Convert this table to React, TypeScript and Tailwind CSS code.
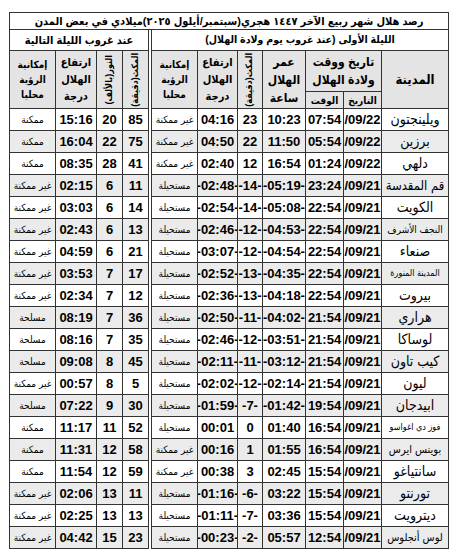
import React from "react";

type Row = {
  city: string;
  citySize?: string;
  date: string;
  time: string;
  age: string;
  m1: string;
  alt1: string;
  v1: string;
  m2: string;
  nur: string;
  alt2: string;
  v2: string;
};

const rows: Row[] = [
  { city: "ويلينجتون", date: "/09/22", time: "07:54", age: "10:23", m1: "23", alt1: "04:16", v1: "غير ممكنة", m2: "85", nur: "20", alt2: "15:16", v2: "ممكنة" },
  { city: "برزين", date: "/09/22", time: "05:54", age: "11:50", m1: "22", alt1: "04:50", v1: "غير ممكنة", m2: "75", nur: "22", alt2: "16:04", v2: "ممكنة" },
  { city: "دلهي", date: "/09/22", time: "01:24", age: "16:54", m1: "12", alt1: "02:40", v1: "غير ممكنة", m2: "41", nur: "28", alt2: "08:35", v2: "ممكنة" },
  { city: "قم المقدسة", citySize: "text-[13px]", date: "/09/21", time: "23:24", age: "-05:19-", m1: "-14-", alt1: "-02:48-", v1: "مستحيلة", m2: "11", nur: "6", alt2: "02:15", v2: "غير ممكنة" },
  { city: "الكويت", date: "/09/21", time: "22:54", age: "-05:08-", m1: "-14-", alt1: "-02:54-", v1: "مستحيلة", m2: "14", nur: "6", alt2: "03:03", v2: "غير ممكنة" },
  { city: "النجف الأشرف", citySize: "text-[10px]", date: "/09/21", time: "22:54", age: "-04:53-", m1: "-12-", alt1: "-02:46-", v1: "مستحيلة", m2: "13", nur: "6", alt2: "02:43", v2: "غير ممكنة" },
  { city: "صنعاء", date: "/09/21", time: "22:54", age: "-04:54-", m1: "-12-", alt1: "-03:07-", v1: "مستحيلة", m2: "21", nur: "6", alt2: "04:59", v2: "غير ممكنة" },
  { city: "المدينة المنورة", citySize: "text-[9px]", date: "/09/21", time: "22:54", age: "-04:35-", m1: "-13-", alt1: "-02:52-", v1: "مستحيلة", m2: "17", nur: "7", alt2: "03:53", v2: "غير ممكنة" },
  { city: "بيروت", date: "/09/21", time: "22:54", age: "-04:18-", m1: "-13-", alt1: "-02:36-", v1: "مستحيلة", m2: "12", nur: "7", alt2: "02:34", v2: "غير ممكنة" },
  { city: "هراري", date: "/09/21", time: "21:54", age: "-04:02-", m1: "-11-", alt1: "-02:50-", v1: "مستحيلة", m2: "36", nur: "7", alt2: "08:19", v2: "مسلحة" },
  { city: "لوساكا", date: "/09/21", time: "21:54", age: "-03:51-", m1: "-12-", alt1: "-02:46-", v1: "مستحيلة", m2: "35", nur: "7", alt2: "08:16", v2: "مسلحة" },
  { city: "كيب تاون", date: "/09/21", time: "21:54", age: "-03:12-", m1: "-11-", alt1: "-02:11-", v1: "مستحيلة", m2: "45", nur: "8", alt2: "09:08", v2: "مسلحة" },
  { city: "ليون", date: "/09/21", time: "21:54", age: "-02:14-", m1: "-12-", alt1: "-02:02-", v1: "مستحيلة", m2: "5", nur: "8", alt2: "00:57", v2: "غير ممكنة" },
  { city: "ابيدجان", date: "/09/21", time: "19:54", age: "-01:42-", m1: "-7-", alt1: "-01:59-", v1: "مستحيلة", m2: "30", nur: "9", alt2: "07:22", v2: "مسلحة" },
  { city: "فوز دي اغواسو", citySize: "text-[9px]", date: "/09/21", time: "16:54", age: "01:40", m1: "0", alt1: "00:01", v1: "مستحيلة", m2: "52", nur: "11", alt2: "11:17", v2: "ممكنة" },
  { city: "بوينس ايرس", citySize: "text-[11px]", date: "/09/21", time: "16:54", age: "01:55", m1: "1", alt1: "00:16", v1: "غير ممكنة", m2: "58", nur: "12", alt2: "11:31", v2: "ممكنة" },
  { city: "سانتياغو", date: "/09/21", time: "15:54", age: "02:45", m1: "3", alt1: "00:38", v1: "غير ممكنة", m2: "59", nur: "12", alt2: "11:54", v2: "ممكنة" },
  { city: "تورنتو", date: "/09/21", time: "15:54", age: "03:22", m1: "-6-", alt1: "-01:16-", v1: "مستحيلة", m2: "11", nur: "13", alt2: "02:06", v2: "غير ممكنة" },
  { city: "ديترويت", date: "/09/21", time: "15:54", age: "03:36", m1: "-7-", alt1: "-01:11-", v1: "مستحيلة", m2: "13", nur: "13", alt2: "02:25", v2: "غير ممكنة" },
  { city: "لوس أنجلوس", citySize: "text-[11px]", date: "/09/21", time: "12:54", age: "05:57", m1: "-2-", alt1: "-00:23-", v1: "مستحيلة", m2: "23", nur: "15", alt2: "04:42", v2: "غير ممكنة" },
];

const head = "bg-[#e4e4e4] flex flex-col items-center justify-center font-bold whitespace-nowrap";

function Num({ v, bg }: { v: string; bg: string }) {
  return (
    <div className={`${bg} flex items-center justify-center overflow-hidden whitespace-nowrap text-[13px] font-bold`}>
      {v}
    </div>
  );
}

function Status({ v, bg }: { v: string; bg: string }) {
  return (
    <div dir="rtl" className={`${bg} flex items-center justify-center overflow-hidden whitespace-nowrap text-[10px]`}>
      {v}
    </div>
  );
}

function Vertical({ text, span }: { text: string; span?: boolean }) {
  return (
    <div className={`bg-[#e4e4e4] flex items-center justify-center overflow-hidden ${span ? "row-span-2" : ""}`}>
      <span dir="rtl" className="-rotate-90 whitespace-nowrap text-[9px] font-bold">
        {text}
      </span>
    </div>
  );
}

export default function App() {
  return (
    <div className="bg-white min-h-[559px] pt-[12px] pl-[9px] text-black font-['Liberation_Sans','DejaVu_Sans_Condensed','DejaVu_Sans',sans-serif]">
      <div className="w-[440px]">
        {/* Title */}
        <div dir="rtl" className="h-[18px] border border-[#333] flex items-center justify-center overflow-hidden text-[11px] font-bold whitespace-nowrap">
          رصد هلال شهر ربيع الآخر ١٤٤٧ هجري(سبتمبر/أيلول ٢٠٢٥)ميلادي في بعض المدن
        </div>

        <div className="flex">
          {/* Next night */}
          <div className="grid w-[140px] grid-cols-[45px_40px_25px_25px] grid-rows-[20px_57px_repeat(20,21px)] gap-px bg-[#333] px-px pb-px">
            <div dir="rtl" className="col-span-4 bg-white flex items-center justify-center whitespace-nowrap text-[11px] font-bold">
              عند غروب الليلة التالية
            </div>
            <div className={`${head} text-[10px] leading-[15px]`}>
              <span>إمكانية</span>
              <span>الرؤية</span>
              <span>محليا</span>
            </div>
            <div className={`${head} text-[11px] leading-[17px]`}>
              <span>ارتفاع</span>
              <span>الهلال</span>
              <span>درجة</span>
            </div>
            <Vertical text="النور(بالألف)" />
            <Vertical text="المكث(دقيقة)" />
            {rows.map((r, i) => {
              const bg = i % 2 === 1 ? "bg-[#ebebeb]" : "bg-white";
              return (
                <React.Fragment key={r.city}>
                  <Status v={r.v2} bg={bg} />
                  <Num v={r.alt2} bg={bg} />
                  <Num v={r.nur} bg={bg} />
                  <Num v={r.m2} bg={bg} />
                </React.Fragment>
              );
            })}
          </div>

          <div className="w-[2px] bg-white" />

          {/* First night */}
          <div className="grid w-[298px] grid-cols-[45px_39px_24px_42px_37px_37px_66px] grid-rows-[20px_40px_16px_repeat(20,21px)] gap-px bg-[#333] px-px pb-px">
            <div dir="rtl" className="col-span-7 bg-white flex items-center justify-center whitespace-nowrap text-[10.5px] font-bold">
              الليلة الأولى (عند غروب يوم ولادة الهلال)
            </div>
            <div className={`${head} row-span-2 text-[10px] leading-[15px]`}>
              <span>إمكانية</span>
              <span>الرؤية</span>
              <span>محليا</span>
            </div>
            <div className={`${head} row-span-2 text-[11px] leading-[17px]`}>
              <span>ارتفاع</span>
              <span>الهلال</span>
              <span>درجة</span>
            </div>
            <Vertical text="المكث(دقيقة)" span />
            <div className={`${head} row-span-2 text-[12px] leading-[18px]`}>
              <span>عمر</span>
              <span>الهلال</span>
              <span>ساعة</span>
            </div>
            <div className={`${head} col-span-2 text-[12px] leading-[18px]`}>
              <span dir="rtl">تاريخ ووقت</span>
              <span dir="rtl">ولادة الهلال</span>
            </div>
            <div className={`${head} row-span-2 text-[13px]`}>المدينة</div>
            <div className={`${head} text-[10px]`}>الوقت</div>
            <div className={`${head} text-[10px]`}>التاريخ</div>
            {rows.map((r, i) => {
              const bg = i % 2 === 1 ? "bg-[#ebebeb]" : "bg-white";
              return (
                <React.Fragment key={r.city}>
                  <Status v={r.v1} bg={bg} />
                  <Num v={r.alt1} bg={bg} />
                  <Num v={r.m1} bg={bg} />
                  <Num v={r.age} bg={bg} />
                  <Num v={r.time} bg={bg} />
                  <Num v={r.date} bg={bg} />
                  <div dir="rtl" className={`${bg} flex items-center justify-center overflow-hidden whitespace-nowrap ${r.citySize ?? "text-[14px]"}`}>
                    {r.city}
                  </div>
                </React.Fragment>
              );
            })}
          </div>
        </div>
      </div>
    </div>
  );
}
